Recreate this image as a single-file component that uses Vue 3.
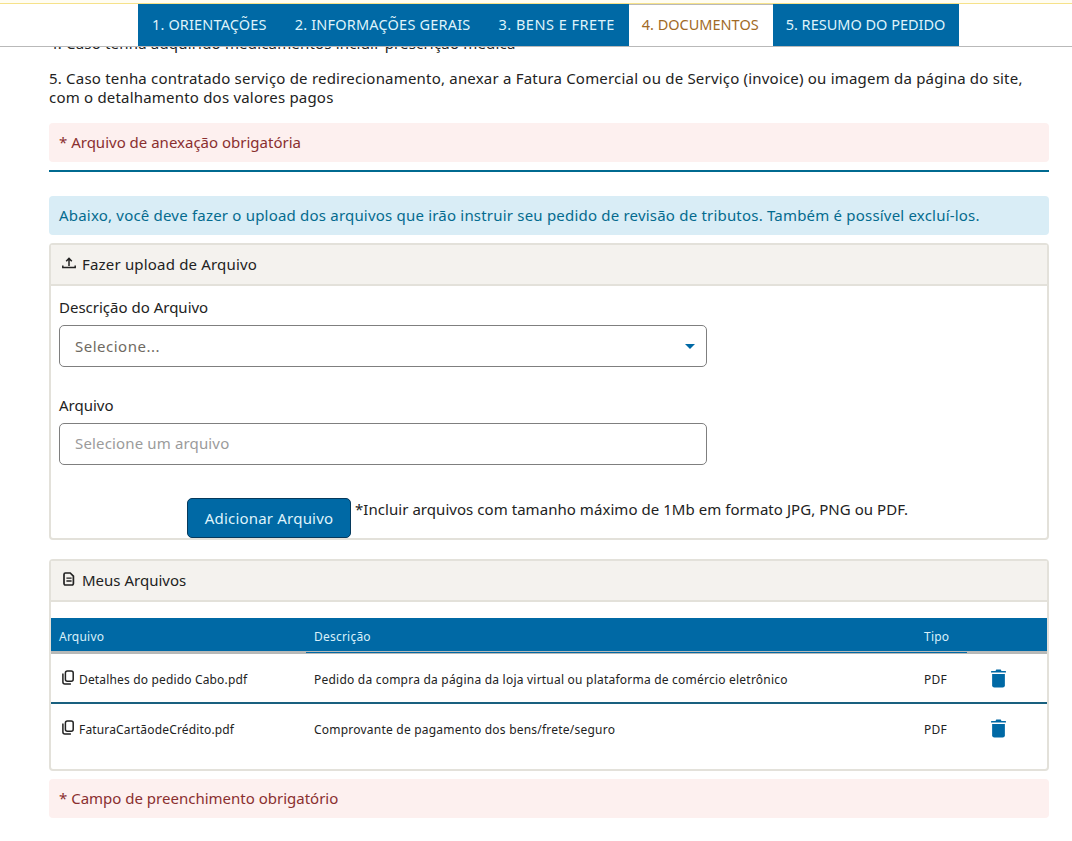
<script setup>
const tabs = [
  { label: '1. ORIENTAÇÕES', active: false },
  { label: '2. INFORMAÇÕES GERAIS', active: false },
  { label: '3. BENS E FRETE', active: false },
  { label: '4. DOCUMENTOS', active: true },
  { label: '5. RESUMO DO PEDIDO', active: false }
]
const files = [
  { name: 'Detalhes do pedido Cabo.pdf', desc: 'Pedido da compra da página da loja virtual ou plataforma de comércio eletrônico', type: 'PDF' },
  { name: 'FaturaCartãodeCrédito.pdf', desc: 'Comprovante de pagamento dos bens/frete/seguro', type: 'PDF' }
]
</script>

<template>
  <div class="page">
    <header class="topbar">
      <nav class="tabs">
        <a v-for="t in tabs" :key="t.label" class="tab" :class="{ active: t.active }">{{ t.label }}</a>
      </nav>
    </header>

    <main class="content">
      <p class="line4">4. Caso tenha adquirido medicamentos incluir prescrição médica</p>
      <p class="line5">5. Caso tenha contratado serviço de redirecionamento, anexar a Fatura Comercial ou de Serviço (invoice) ou imagem da página do site, com o detalhamento dos valores pagos</p>
      <div class="alert danger first">* Arquivo de anexação obrigatória</div>
      <hr class="rule" />
      <div class="alert info">Abaixo, você deve fazer o upload dos arquivos que irão instruir seu pedido de revisão de tributos. Também é possível excluí-los.</div>

      <section class="card upload">
        <div class="card-head">
          <svg class="ico" width="14" height="14" viewBox="0 0 14 14" fill="none" stroke="#222" stroke-width="1.5">
            <path d="M7 10V2.5M4.2 5.2 7 2.4l2.8 2.8" />
            <path d="M.8 9.5v2h12.4v-2" />
          </svg>
          <span class="head-text">Fazer upload de Arquivo</span>
        </div>
        <div class="card-body">
          <label class="lbl">Descrição do Arquivo</label>
          <div class="field select">
            <span class="val">Selecione...</span>
            <i class="caret"></i>
          </div>
          <label class="lbl second">Arquivo</label>
          <div class="field file"><span class="ph">Selecione um arquivo</span></div>
          <div class="actions">
            <button class="btn">Adicionar Arquivo</button>
            <span class="hint">*Incluir arquivos com tamanho máximo de 1Mb em formato JPG, PNG ou PDF.</span>
          </div>
        </div>
      </section>

      <section class="card mine">
        <div class="card-head doc-head">
          <svg class="ico doc" width="12" height="14" viewBox="0 0 12 14" fill="none" stroke="#222" stroke-width="1.7">
            <path d="M2.4 1h4.8l3.2 3.2v7.4a1.4 1.4 0 0 1-1.4 1.4H2.4A1.4 1.4 0 0 1 1 11.6V2.4A1.4 1.4 0 0 1 2.4 1Z" />
            <path d="M3.4 6.2h5.2M3.4 9h5.2" stroke-width="1.3" />
          </svg>
          <span>Meus Arquivos</span>
        </div>
        <div class="table">
          <div class="row thead">
            <span class="c1">Arquivo</span>
            <span class="c2">Descrição</span>
            <span class="c3">Tipo</span>
            <span class="c4"></span>
          </div>
          <div v-for="f in files" :key="f.name" class="row tr">
            <span class="c1 name">
              <svg width="12" height="15" viewBox="0 0 12 15" fill="none" stroke="#222" stroke-width="1.5">
                <path d="M.9 3.5V12a2 2 0 0 0 2 2h6" />
                <rect x="3.4" y="1" width="7.8" height="10.2" rx="2" />
              </svg>
              <span>{{ f.name }}</span>
            </span>
            <span class="c2">{{ f.desc }}</span>
            <span class="c3 pdf">{{ f.type }}</span>
            <span class="c4">
              <svg width="15" height="19" viewBox="0 0 16 19" fill="#0069a5">
                <path d="M5.6 0h4.8l.8 1.5h4.3a.5.5 0 0 1 .5.5v1.2H0V2a.5.5 0 0 1 .5-.5h4.3Z" />
                <path d="M1.2 4.6h13.6v12a2.4 2.4 0 0 1-2.4 2.4H3.6a2.4 2.4 0 0 1-2.4-2.4Z" />
              </svg>
            </span>
          </div>
        </div>
      </section>

      <div class="alert danger last">* Campo de preenchimento obrigatório</div>
    </main>
  </div>
</template>

<style>
html, body { margin: 0; background: #fff; }
</style>

<style scoped>
.page {
  position: relative;
  height: 841px;
  overflow: hidden;
  font-family: "Noto Sans", "DejaVu Sans", sans-serif;
  font-size: 15px;
  color: #222;
  background: #fff;
}
.topbar {
  position: absolute;
  top: 0; left: 0; right: 0;
  height: 42px;
  padding-top: 4px;
  background: #fff;
  border-bottom: 1px solid #b9b9b9;
  box-shadow: inset 0 3px 0 #fffdf2, inset 0 4px 0 #f6e28a;
}
.tabs { display: flex; padding-left: 138px; height: 42px; }
.tab {
  display: flex;
  align-items: center;
  padding: 0 14px 2px;
  box-sizing: border-box;
  height: 42px;
  background: #0069a5;
  color: #dff3fb;
  font-size: 14.5px;
  white-space: nowrap;
}
.tab:nth-child(1) { letter-spacing: .15px; }
.tab:nth-child(2) { letter-spacing: .2px; }
.tab:nth-child(3) { letter-spacing: .5px; }
.tab:nth-child(5) { padding: 0 14px 2px 13px; }
.tab.active {
  background: #fff;
  color: #a16a26;
  border-top: 1px solid #b9b9b9;
  padding: 0 14px 3px 13px;
}
.content {
  padding: 34px 23px 0 49px;
  line-height: 19px;
}
p { margin: 0; }
.line4 { letter-spacing: .18px; }
.line5 { margin-top: 16px; letter-spacing: .2px; }
.alert {
  height: 39px;
  box-sizing: border-box;
  padding: 0 10px;
  display: flex;
  align-items: center;
  border-radius: 4px;
}
.danger { background: #fdf0ef; color: #8a2f2f; }
.info { background: #d9edf6; color: #046b8f; letter-spacing: .2px; }
.first { margin-top: 16px; }
.rule { border: 0; height: 2px; background: #006a90; margin: 8px 0 24px; }
.card {
  border: 2px solid #e3e1da;
  border-radius: 4px;
  background: #fff;
}
.upload { margin-top: 8px; height: 297px; box-sizing: border-box; }
.card-head {
  height: 41px;
  box-sizing: border-box;
  background: #f4f2ee;
  border-bottom: 2px solid #e3e1da;
  display: flex;
  align-items: center;
  gap: 6px;
  padding-left: 11px;
}
.head-text { letter-spacing: .18px; }
.doc-head { gap: 7px; padding-left: 12px; }
.ico { flex: none; margin-top: -3px; }
.card-body { padding: 12px 8px 0; }
.lbl { display: block; height: 19px; }
.second { margin-top: 29px; }
.field {
  width: 648px;
  height: 42px;
  margin-top: 8px;
  box-sizing: border-box;
  border: 1px solid #7f7f7f;
  border-radius: 5px;
  padding: 0 15px;
  display: flex;
  align-items: center;
  justify-content: space-between;
}
.val { color: #6f6a62; letter-spacing: .5px; }
.ph { color: #9b9b9b; letter-spacing: .15px; padding-bottom: 2px; }
.caret {
  width: 0; height: 0;
  margin-right: -4px;
  border-left: 5px solid transparent;
  border-right: 5px solid transparent;
  border-top: 5px solid #0069a5;
}
.actions {
  margin-top: 33px;
  padding-left: 128px;
  display: flex;
  align-items: flex-start;
  gap: 4px;
}
.btn {
  width: 164px;
  height: 40px;
  background: #0069a5;
  color: #dff3fb;
  border: 1px solid #06395c;
  border-radius: 5px;
  font: inherit;
  letter-spacing: .2px;
  padding: 0;
}
.hint { margin-top: 2px; white-space: nowrap; letter-spacing: .05px; }
.mine { margin-top: 19px; height: 212px; box-sizing: border-box; }
.table { margin-top: 16px; font-size: 12px; letter-spacing: .22px; }
.row {
  display: grid;
  grid-template-columns: 255px 610px 60px 1fr;
  align-items: center;
  padding-left: 8px;
}
.thead {
  position: relative;
  height: 36px;
  box-sizing: border-box;
  padding-top: 3px;
  background: #0069a5;
  color: #d9f0fa;
  border-bottom: 3px solid #b7b9b8;
}
.thead::after {
  content: "";
  position: absolute;
  left: 255px;
  width: 661px;
  bottom: -2px;
  height: 1px;
  background: #0069a5;
}
.tr { height: 50px; padding-top: 3px; box-sizing: border-box; border-bottom: 2px solid #19607f; }
.tr:last-child { border-bottom: 0; padding-top: 1px; }
.name { display: flex; align-items: center; gap: 5px; padding-left: 3px; letter-spacing: .16px; }
.name svg { margin-top: -5px; flex: none; }
.c4 { display: flex; padding-left: 7px; padding-bottom: 2px; }
.last { margin-top: 8px; }
</style>
